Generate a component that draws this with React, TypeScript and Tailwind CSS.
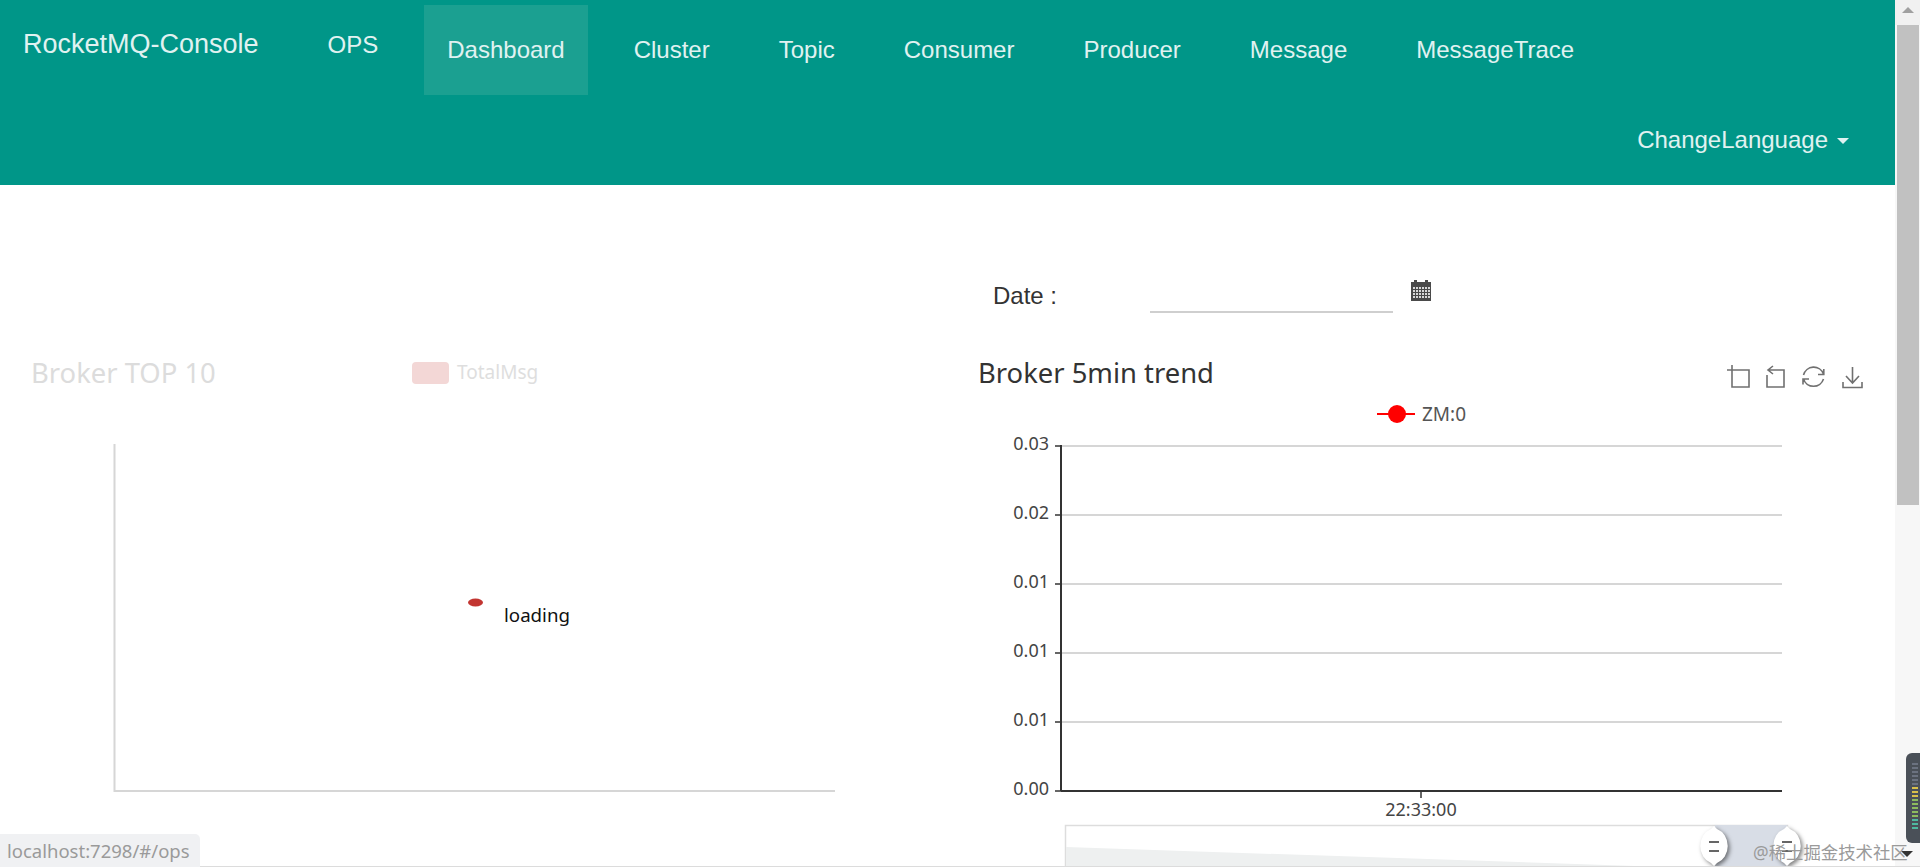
import React from "react";

const navItems = ["Dashboard", "Cluster", "Topic", "Consumer", "Producer", "Message", "MessageTrace"];

const yLabels = ["0.03", "0.02", "0.01", "0.01", "0.01", "0.00"];

// Broker TOP 10, still loading, so the axis is faded out
const TopChart = () => (
  <svg width="860" height="360" viewBox="0 0 860 360" className="block">
    <path d="M114.5 0V347H835" fill="none" stroke="#d6d6d6" strokeWidth="2" />
    <ellipse cx="475.5" cy="158.5" rx="7.5" ry="4" fill="#c23531" />
    <text x="504" y="178" fontSize="18.7" fill="#111" fontFamily="'Noto Sans', sans-serif">
      loading
    </text>
  </svg>
);

// Broker 5min trend
const TrendChart = () => (
  <svg width="860" height="410" viewBox="0 0 860 410" className="block overflow-visible">
    {yLabels.map((label, i) => {
      const y = 2 + i * 69;
      return (
        <g key={i}>
          <line x1="93" y1={y} x2="814" y2={y} stroke={i === 5 ? "#333" : "#c8c8c8"} strokeWidth={i === 5 ? 2 : 1.5} />
          <line x1="87" y1={y} x2="93" y2={y} stroke="#333" strokeWidth="1.5" />
          <text x="81" y={y + 4} textAnchor="end" fontSize="18" fill="#444" fontFamily="'Noto Sans', sans-serif">
            {label}
          </text>
        </g>
      );
    })}
    <line x1="93" y1="1" x2="93" y2="347" stroke="#333" strokeWidth="2" />
    <line x1="453" y1="347" x2="453" y2="354" stroke="#333" strokeWidth="1.5" />
    <text x="453" y="372" textAnchor="middle" fontSize="18" fill="#444" fontFamily="'Noto Sans', sans-serif">
      22:33:00
    </text>
  </svg>
);

const Handle = ({ cx }: { cx: number }) => (
  <g>
    <path
      d={`M${cx} 1L${cx + 3} 4A16 18 0 0 1 ${cx + 3} 38L${cx} 41L${cx - 3} 38A16 18 0 0 1 ${cx - 3} 4Z`}
      fill="#fff"
      style={{ filter: "drop-shadow(2px 2px 2px rgba(0,0,0,.5))" }}
    />
    <path d={`M${cx - 5} 17h10M${cx - 5} 26h10`} stroke="#666" strokeWidth="2" />
  </g>
);

const DataZoom = () => (
  <svg width="740" height="42" viewBox="0 0 740 42" className="block overflow-visible">
    <rect x="0.5" y="0.5" width="722" height="42" fill="#fff" stroke="#ddd" strokeWidth="1.5" />
    <polygon points="1,22 600,42 1,42" fill="#eef0f0" />
    <rect x="650" y="0" width="72" height="42" fill="#d8dde6" />
    <Handle cx={649} />
    <Handle cx={722} />
  </svg>
);

const ToolIcons = () => (
  <svg width="140" height="26" viewBox="0 0 140 26" fill="none" stroke="#707070" strokeWidth="1.6" className="block">
    {/* zoom */}
    <path d="M0 6H22V23H5V1" />
    {/* undo zoom */}
    <path d="M41 6H57V23H40V11M46 2L41 6L46 10" />
    {/* restore */}
    <path d="M76.5 11A10.5 10.5 0 0 1 96.5 10M96.8 5V10.5H91M96.5 15A10.5 10.5 0 0 1 76.5 15M76 20.5V15H82" />
    {/* save */}
    <path d="M125.5 3V19M119 12L125.5 19L132 12M116 18V23.5H135V18" />
  </svg>
);

// Small calendar with the day grid punched out
const CalendarIcon = () => (
  <svg width="20" height="21" viewBox="0 0 20 21" className="block">
    <rect x="0" y="2" width="20" height="19" fill="#4a4a4a" />
    <rect x="3" y="0" width="3" height="3" fill="#4a4a4a" />
    <rect x="14" y="0" width="3" height="3" fill="#4a4a4a" />
    {[7, 10, 13, 16].map((y) =>
      [2, 5, 8, 11, 14, 17].map((x) => <rect key={`${x}-${y}`} x={x} y={y} width="2" height="2" fill="#d8d8d8" />)
    )}
  </svg>
);

export default function App() {
  return (
    <div
      className="relative h-[867px] w-[1920px] overflow-hidden bg-white text-[#333]"
      style={{ fontFamily: "'Liberation Sans', Arial, sans-serif" }}
    >
      <div className="flex h-full">
        <div className="min-w-0 flex-1">
          {/* Navbar */}
          <nav className="h-[185px] bg-[#009688] text-[#e0f2f1]">
            <div className="flex h-[95px] items-start">
              <span className="ml-[23px] mt-[29px] text-[27px] leading-[30px]">RocketMQ-Console</span>
              <span className="ml-[69px] mt-[30px] text-[24px] leading-[30px]">OPS</span>
              <ul className="ml-[46px] mt-[5px] flex gap-[23px]">
                {navItems.map((item) => (
                  <li
                    key={item}
                    className={
                      "h-[90px] px-[23px] pt-[30px] text-[24px] leading-[30px] " +
                      (item === "Dashboard" ? "bg-[#1ba091]" : "")
                    }
                  >
                    {item}
                  </li>
                ))}
              </ul>
            </div>
            <div className="flex justify-end pr-[46px] pt-[30px]">
              <span className="text-[24px] leading-[30px]">ChangeLanguage</span>
              <span className="ml-[9px] mt-[13px] h-0 w-0 border-x-[6px] border-t-[6px] border-x-transparent border-t-[#e0f2f1]" />
            </div>
          </nav>

          {/* Date picker */}
          <div className="flex h-[124px] items-start pl-[993px] pt-[95px]">
            <span className="w-[157px] text-[24px] leading-[32px]">Date :</span>
            <div className="h-[33px] w-[243px] border-b-2 border-[#cfcfcf]" />
            <div className="ml-[18px]">
              <CalendarIcon />
            </div>
          </div>

          {/* Charts */}
          <div className="flex" style={{ fontFamily: "'Noto Sans', sans-serif" }}>
            <section className="w-[960px] shrink-0">
              <div className="flex h-[135px] items-start pt-[45px]">
                <h2 className="ml-[31px] w-[381px] text-[27.4px] leading-[38px] text-[#dcdcdc]">Broker TOP 10</h2>
                <span className="mt-[8px] h-[22px] w-[37px] rounded-[4px] bg-[#f3d7d6]" />
                <span className="ml-[8px] mt-[5px] text-[19px] leading-[26px] text-[#dedede]">TotalMsg</span>
              </div>
              <TopChart />
            </section>

            <section className="relative min-w-0 flex-1">
              <div className="flex h-[135px] items-start justify-between pr-[28px] pt-[45px]">
                <h2 className="ml-[18px] text-[27.4px] leading-[38px] text-[#333]">Broker 5min trend</h2>
                <div className="mt-[10px]">
                  <ToolIcons />
                </div>
              </div>
              <div className="pl-[8px]">
                <TrendChart />
              </div>
              {/* legend sits on top of the chart area */}
              <div className="absolute left-[417px] top-[93px] flex items-center">
                <span className="relative h-[2px] w-[38px] bg-[#f00]">
                  <span className="absolute left-[11px] top-[-8px] h-[18px] w-[18px] rounded-full bg-[#f00]" />
                </span>
                <span className="ml-[7px] text-[19px] leading-[24px] text-[#555]">ZM:0</span>
              </div>
              <div className="absolute left-[105px] top-[516px]">
                <DataZoom />
              </div>
            </section>
          </div>
        </div>

        {/* Scrollbar */}
        <aside className="flex w-[25px] shrink-0 flex-col bg-[#f7f7f7]">
          <div className="flex h-[25px] items-center justify-center bg-[#f1f1f1] pb-[5px]">
            <span className="h-0 w-0 border-x-[6px] border-b-[6px] border-x-transparent border-b-[#a0a0a0]" />
          </div>
          <div className="ml-[2px] mr-[1px] h-[480px] bg-[#c1c1c1]" />
        </aside>
      </div>

      {/* Browser status bubble */}
      <div className="absolute bottom-0 left-0 h-[33px] w-[200px] rounded-tr-[5px] bg-[#f0f1f3] pl-[7px] text-[18.5px] leading-[34px] text-[#9a9a9a]" style={{ fontFamily: "'Noto Sans', sans-serif" }}>
        localhost:7298/#/ops
      </div>
      <div className="absolute bottom-0 left-[200px] h-px w-[1720px] bg-[#dcdcdc]" />

      {/* Scrollbar arrow */}
      <span className="absolute left-[1901px] top-[851px] h-0 w-0 border-x-[6px] border-t-[6px] border-x-transparent border-t-[#333]" />

      {/* Level meter widget */}
      <div className="absolute left-[1906px] top-[753px] flex h-[90px] w-[14px] flex-col gap-[2px] rounded-l-[6px] bg-[#4a5058] pl-[6px] pt-[10px]">
        {Array.from({ length: 17 }).map((_, i) => (
          <span
            key={i}
            className="h-[2px] w-[6px]"
            style={{ background: i < 6 ? "#6b7280" : i < 9 ? "#d8c04a" : i < 14 ? "#8dbb5e" : "#4fb8a0" }}
          />
        ))}
      </div>

      {/* Watermark */}
      <div className="absolute left-[1753px] top-[840px] whitespace-nowrap text-[17.4px] leading-[24px] text-[#9a9a9a]" style={{ fontFamily: "'Noto Sans', 'Noto Sans CJK SC', sans-serif" }}>
        @稀土掘金技术社区
      </div>
    </div>
  );
}
